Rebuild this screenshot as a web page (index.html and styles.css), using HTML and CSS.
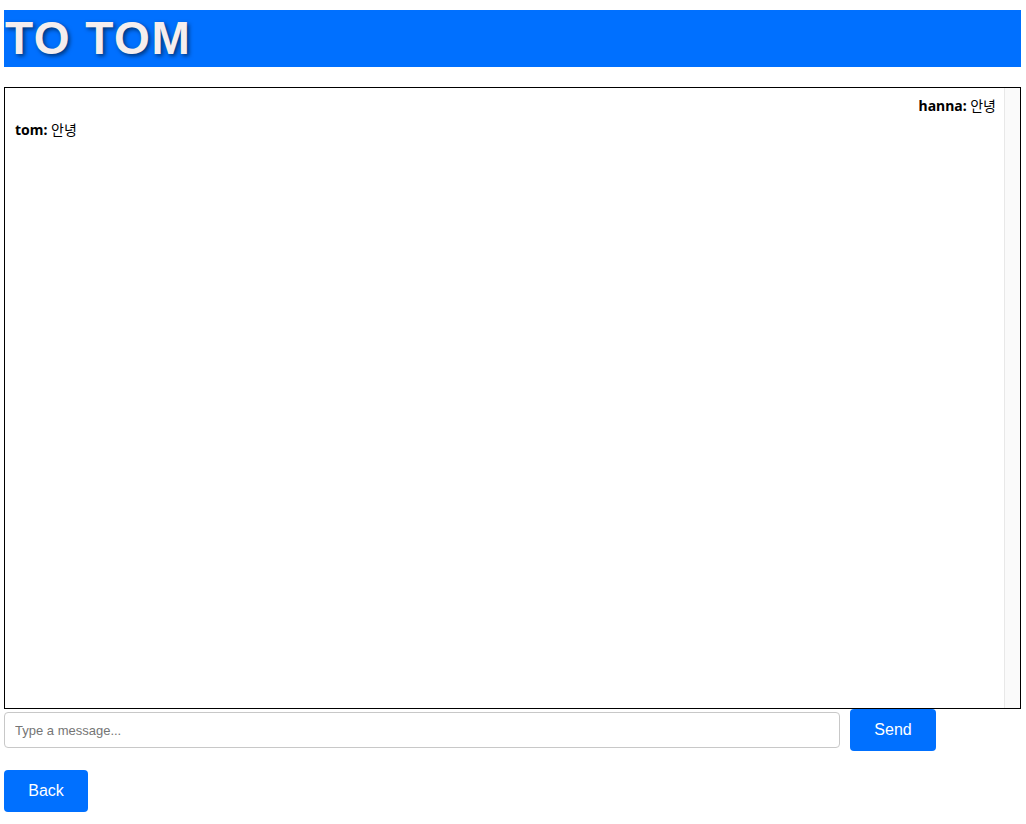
FILE: index.html
```html
<!DOCTYPE html>
<html>
<head>
<meta charset="utf-8">
<link rel="stylesheet" href="styles.css">
</head>
<body>
<h1 class="title">TO TOM</h1>
<div class="chat">
  <div class="msg mine"><b>hanna:</b> 안녕</div>
  <div class="msg"><b>tom:</b> 안녕</div>
</div>
<div class="composer">
  <input class="input" type="text" placeholder="Type a message...">
  <button class="btn send">Send</button>
</div>
<button class="btn back">Back</button>
</body>
</html>
```
FILE: styles.css
```css
html, body { margin: 0; padding: 0; background: #fff; }
body { padding: 10px 5px 0 4px; font-family: "Liberation Sans", Arial, sans-serif; }
.title {
  margin: 0;
  height: 57px;
  line-height: 57px;
  background: #0070ff;
  color: #f5eeee;
  font-family: "Liberation Sans", Arial, sans-serif;
  font-size: 46px;
  letter-spacing: 1.5px;
  font-weight: bold;
  padding-left: 1px;
  text-shadow: 2px 2px 4px rgba(0,0,0,0.55);
}
.chat {
  margin-top: 20px;
  height: 622px;
  box-sizing: border-box;
  border: 1px solid #000;
  overflow: hidden;
  padding: 6px 24px 6px 10px;
  font-family: "Noto Sans", "Noto Sans CJK KR", sans-serif;
  font-size: 14px;
  box-shadow: inset -15px 0 0 #fafafa, inset -16px 0 0 #e8e8e8;
}
.msg { line-height: 24px; color: #000; }
.msg b { font-weight: bold; }
.mine { text-align: right; }
.composer { display: flex; align-items: center; gap: 10px; }
.input {
  width: 836px;
  height: 36px;
  box-sizing: border-box;
  border: 1px solid #c8c8c8;
  border-radius: 4px;
  padding: 0 10px;
  font-family: "Liberation Sans", Arial, sans-serif;
  font-size: 13px;
  margin: 3px 0;
}
.input::placeholder { color: #757575; }
.btn {
  background: #0070ff;
  color: #fff;
  border: none;
  border-radius: 4px;
  font-family: "Liberation Sans", Arial, sans-serif;
  font-size: 16px;
  height: 42px;
  padding: 0;
}
.send { width: 86px; }
.back { width: 84px; margin-top: 19px; display: block; }
```
